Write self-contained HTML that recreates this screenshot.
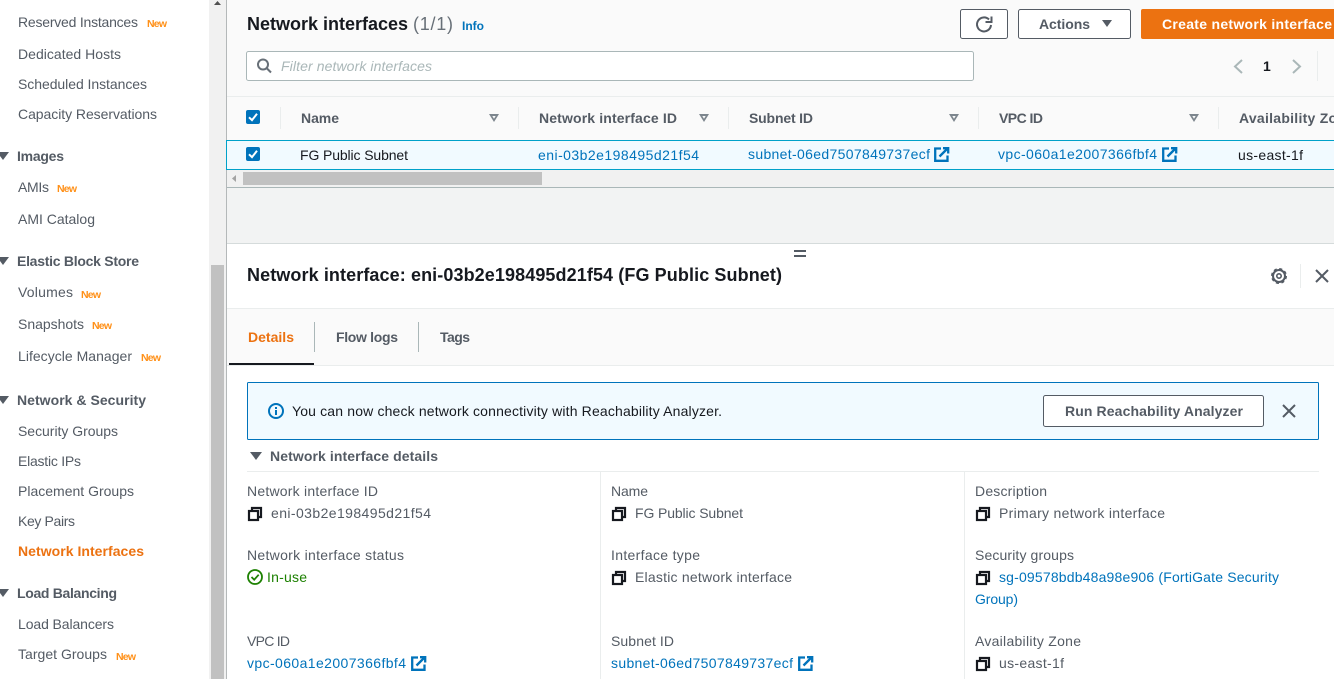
<!DOCTYPE html>
<html><head><meta charset="utf-8"><style>
html,body{margin:0;padding:0;width:1334px;height:679px;overflow:hidden;background:#fff}
svg{display:block}
text{font-family:"Liberation Sans",sans-serif;font-size:14px;fill:#545b64}
.b{font-weight:bold}
.n{font-size:10.5px;font-weight:bold;fill:#ff9018}
.d{fill:#16191f}
.l{fill:#0073bb}
.h{font-size:18px;font-weight:bold;fill:#16191f}
.g{fill:#545b64}
</style></head><body>
<svg width="1334" height="679" viewBox="0 0 1334 679" xmlns="http://www.w3.org/2000/svg">
<defs>
<g id="ext" fill="none" stroke="#0073bb" stroke-width="2.300"><path d="M7 1.500H1.200v12.300h12.300V8.500"/><path d="M5.500 9.500L13 2M9 1.200h5.200v5.300" /></g>
<g id="copy" fill="none" stroke="#16191f" stroke-width="2.200"><path d="M4 3.500V1h9v9h-2.500"/><rect x="1" y="4" width="9" height="9"/></g>
<g id="cb"><rect width="14" height="14" rx="2" fill="#0073bb"/><path d="M3 7.300l3 2.800L11 3.800" fill="none" stroke="#fff" stroke-width="2"/></g>
<path id="sort" d="M0 0h10L5 8zM3.300 2L5 4.800 6.700 2z" fill="#7d868e" fill-rule="evenodd"/>
<path id="tri" d="M0 0h12L6 8z" fill="#545b64"/>
</defs>

<!-- backgrounds -->
<rect x="209" y="0" width="17" height="679" fill="#f1f1f1"/>
<rect x="211" y="265" width="13" height="414" fill="#c1c1c1"/>
<path d="M214 5h7l-3.500-4z" fill="#505050"/>
<rect x="226" y="0" width="1" height="679" fill="#b4b8b9"/>
<rect x="227" y="0" width="1107" height="96" fill="#fafafa"/>
<rect x="227" y="96" width="1107" height="1" fill="#eaeded"/>
<rect x="227" y="97" width="1107" height="43" fill="#fafafa"/>
<rect x="227" y="170" width="1107" height="18" fill="#f1f1f1"/>
<rect x="227" y="188" width="1107" height="55" fill="#f2f3f3"/>
<rect x="227" y="187" width="1107" height="1" fill="#aab7b8"/>
<rect x="227" y="243" width="1107" height="1" fill="#d5dbdb"/>
<rect x="227" y="308" width="1107" height="1" fill="#eaeded"/>
<rect x="227" y="309" width="1107" height="56" fill="#fafafa"/>
<rect x="227" y="365" width="1107" height="1" fill="#eaeded"/>

<!-- sidebar -->
<text x="18" y="27" textLength="120">Reserved Instances</text><text class="n" x="147" y="27" textLength="20">New</text>
<text x="18" y="59" textLength="103">Dedicated Hosts</text>
<text x="18" y="89" textLength="129">Scheduled Instances</text>
<text x="18" y="119" textLength="139">Capacity Reservations</text>
<use href="#tri" x="-3" y="152"/>
<text class="b" x="17" y="161" textLength="47">Images</text>
<text x="18" y="192" textLength="31">AMIs</text><text class="n" x="57" y="192" textLength="20">New</text>
<text x="18" y="224" textLength="77">AMI Catalog</text>
<use href="#tri" x="-3" y="257"/>
<text class="b" x="17" y="266" textLength="122">Elastic Block Store</text>
<text x="18" y="297" textLength="55">Volumes</text><text class="n" x="81" y="298" textLength="20">New</text>
<text x="18" y="329" textLength="66">Snapshots</text><text class="n" x="92" y="329" textLength="20">New</text>
<text x="18" y="361" textLength="114">Lifecycle Manager</text><text class="n" x="141" y="361" textLength="20">New</text>
<use href="#tri" x="-3" y="396"/>
<text class="b" x="17" y="405" textLength="129">Network &amp; Security</text>
<text x="18" y="436" textLength="100">Security Groups</text>
<text x="18" y="466" textLength="63">Elastic IPs</text>
<text x="18" y="496" textLength="116">Placement Groups</text>
<text x="18" y="526" textLength="57">Key Pairs</text>
<text class="b" x="18" y="556" textLength="126" style="fill:#ec7211">Network Interfaces</text>
<use href="#tri" x="-3" y="589"/>
<text class="b" x="17" y="598" textLength="100">Load Balancing</text>
<text x="18" y="629" textLength="96">Load Balancers</text>
<text x="18" y="659" textLength="89">Target Groups</text><text class="n" x="116" y="660" textLength="20">New</text>

<!-- header -->
<text class="h" x="247" y="30" textLength="161">Network interfaces</text>
<text x="413" y="30" textLength="40" style="font-size:18px;fill:#687078">(1/1)</text>
<text class="b l" x="462" y="30" textLength="22" style="font-size:12px">Info</text>
<rect x="960.500" y="9.500" width="47" height="29" rx="2" fill="#fff" stroke="#545b64"/>
<path d="M989 19.500A7 7 0 1 0 991 25" fill="none" stroke="#545b64" stroke-width="2"/>
<path d="M985.500 22h6v-5.500" fill="none" stroke="#545b64" stroke-width="2"/>
<rect x="1018.500" y="9.500" width="112" height="29" rx="2" fill="#fff" stroke="#545b64"/>
<text class="b" x="1039" y="29" textLength="51">Actions</text>
<path d="M1102 20h10l-5 7z" fill="#545b64"/>
<rect x="1141" y="9" width="195" height="30" rx="2" fill="#ec7211"/>
<text class="b" x="1162" y="29" textLength="170" style="fill:#fff">Create network interface</text>
<rect x="246.500" y="51.500" width="727" height="29" rx="2" fill="#fff" stroke="#aab7b8"/>
<circle cx="263" cy="64.500" r="5" fill="none" stroke="#687078" stroke-width="2"/><path d="M266.500 68l4.500 4.500" stroke="#687078" stroke-width="2"/>
<text x="281" y="71" textLength="151" style="font-style:italic;fill:#aab7b8">Filter network interfaces</text>
<path d="M1242 60l-7 6.500 7 6.500M1293 60l7 6.500-7 6.500" fill="none" stroke="#aab7b8" stroke-width="2"/>
<text class="b d" x="1263" y="71" style="fill:#16191f">1</text>
<rect x="1317" y="51" width="1" height="30" fill="#eaeded"/>

<!-- table head -->
<use href="#cb" x="246" y="110"/>
<g fill="#eaeded"><rect x="280" y="107" width="1" height="22"/><rect x="518" y="107" width="1" height="22"/><rect x="728" y="107" width="1" height="22"/><rect x="978" y="107" width="1" height="22"/><rect x="1218" y="107" width="1" height="22"/></g>
<text class="b" x="301" y="123" textLength="38">Name</text>
<text class="b" x="539" y="123" textLength="138">Network interface ID</text>
<text class="b" x="749" y="123" textLength="64">Subnet ID</text>
<text class="b" x="999" y="123" textLength="44">VPC ID</text>
<text class="b" x="1239" y="123" textLength="115">Availability Zone</text>
<use href="#sort" x="489" y="114"/><use href="#sort" x="699" y="114"/><use href="#sort" x="949" y="114"/><use href="#sort" x="1189" y="114"/>

<!-- row -->
<rect x="226.500" y="140.500" width="1110" height="29" fill="#f1faff" stroke="#00a1c9"/>
<use href="#cb" x="246" y="147"/>
<text class="d" x="300" y="160" textLength="108">FG Public Subnet</text>
<text class="l" x="538" y="160" textLength="161">eni-03b2e198495d21f54</text>
<text class="l" x="748" y="159" textLength="182">subnet-06ed7507849737ecf</text><use href="#ext" x="934" y="147"/>
<text class="l" x="998" y="159" textLength="159">vpc-060a1e2007366fbf4</text><use href="#ext" x="1162" y="147"/>
<text class="d" x="1238" y="160" textLength="65">us-east-1f</text>
<!-- h scrollbar -->
<rect x="243" y="172" width="299" height="13" fill="#c1c1c1"/>
<path d="M236 175v7l-4-3.500z" fill="#a3a3a3"/>

<!-- resize handle -->
<rect x="794" y="250" width="12" height="2" fill="#545b64"/><rect x="794" y="255" width="12" height="2" fill="#545b64"/>

<!-- panel header -->
<text class="h" x="247" y="281" textLength="535">Network interface: eni-03b2e198495d21f54 (FG Public Subnet)</text>
<circle cx="1279" cy="276" r="2.200" fill="none" stroke="#545b64" stroke-width="1.600"/>
<circle cx="1279" cy="276" r="6" fill="none" stroke="#545b64" stroke-width="2"/>
<circle cx="1279" cy="276" r="7" fill="none" stroke="#545b64" stroke-width="2" stroke-dasharray="3 2.500"/>
<rect x="1300" y="264" width="1" height="24" fill="#eaeded"/>
<path d="M1316 270l12 12M1328 270l-12 12" stroke="#545b64" stroke-width="2"/>

<!-- tabs -->
<text class="b" x="248" y="342" textLength="46" style="fill:#ec7211">Details</text>
<rect x="229" y="363" width="85" height="2" fill="#16191f"/>
<rect x="314" y="322" width="1" height="30" fill="#aab7b8"/>
<text class="b" x="336" y="342" textLength="62">Flow logs</text>
<rect x="418" y="322" width="1" height="30" fill="#aab7b8"/>
<text class="b" x="440" y="342" textLength="30">Tags</text>

<!-- alert -->
<rect x="247.500" y="382.500" width="1071" height="57" rx="1" fill="#f1faff" stroke="#0073bb"/>
<circle cx="276" cy="411" r="7" fill="none" stroke="#0073bb" stroke-width="2"/>
<rect x="275" y="410" width="2" height="5" fill="#0073bb"/><rect x="275" y="407" width="2" height="2" fill="#0073bb"/>
<text class="d" x="292" y="416" textLength="430">You can now check network connectivity with Reachability Analyzer.</text>
<rect x="1043.500" y="395.500" width="220" height="31" rx="2" fill="#fff" stroke="#545b64"/>
<text class="b" x="1065" y="416" textLength="178">Run Reachability Analyzer</text>
<path d="M1283 405l12 12M1295 405l-12 12" stroke="#545b64" stroke-width="2"/>

<!-- details -->
<use href="#tri" x="250" y="452"/>
<text class="b" x="270" y="461" textLength="168">Network interface details</text>
<rect x="247" y="471" width="1072" height="1" fill="#eaeded"/>
<rect x="600" y="472" width="1" height="207" fill="#eaeded"/>
<rect x="964" y="472" width="1" height="207" fill="#eaeded"/>

<text x="247" y="496" textLength="131">Network interface ID</text>
<use href="#copy" x="248" y="507"/>
<text x="271" y="518" textLength="160">eni-03b2e198495d21f54</text>
<text x="247" y="560" textLength="157">Network interface status</text>
<circle cx="255" cy="577" r="7" fill="none" stroke="#1d8102" stroke-width="1.800"/>
<path d="M251.500 577l2.700 2.700 4.500-5" fill="none" stroke="#1d8102" stroke-width="1.800"/>
<text x="267" y="582" textLength="40" style="fill:#1d8102">In-use</text>
<text x="247" y="646" textLength="43">VPC ID</text>
<text class="l" x="247" y="668" textLength="159">vpc-060a1e2007366fbf4</text><use href="#ext" x="411" y="656"/>

<text x="611" y="496" textLength="37">Name</text>
<use href="#copy" x="612" y="507"/>
<text x="635" y="518" textLength="108">FG Public Subnet</text>
<text x="611" y="560" textLength="89">Interface type</text>
<use href="#copy" x="612" y="571"/>
<text x="635" y="582" textLength="157">Elastic network interface</text>
<text x="611" y="646" textLength="63">Subnet ID</text>
<text class="l" x="611" y="668" textLength="182">subnet-06ed7507849737ecf</text><use href="#ext" x="798" y="656"/>

<text x="975" y="496" textLength="72">Description</text>
<use href="#copy" x="976" y="507"/>
<text x="999" y="518" textLength="166">Primary network interface</text>
<text x="975" y="560" textLength="99">Security groups</text>
<use href="#copy" x="976" y="571"/>
<text class="l" x="999" y="582" textLength="280">sg-09578bdb48a98e906 (FortiGate Security</text>
<text class="l" x="975" y="604" textLength="43">Group)</text>
<text x="975" y="646" textLength="106">Availability Zone</text>
<use href="#copy" x="976" y="657"/>
<text x="999" y="668" textLength="65">us-east-1f</text>
</svg>
</body></html>
